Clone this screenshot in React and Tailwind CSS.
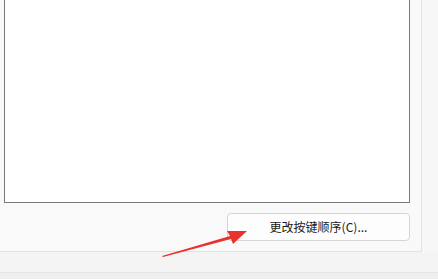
export default function App() {
  return (
    <div
      className="relative w-[438px] h-[279px] overflow-hidden bg-[#f7f7f7]"
      style={{ fontFamily: '"Noto Sans CJK SC", "Liberation Sans", sans-serif' }}
    >
      <div className="w-[422px] h-[252px] border-r border-b border-[#e2e2e2] bg-[#f9f9f9] pl-[4px] pr-[11px] flex flex-col">
        <div className="h-[203px] bg-white border border-t-0 border-[#7a7a7a]" />
        <div className="flex justify-end mt-[10px]">
          <button className="w-[183px] h-[28px] rounded-[4px] border border-[#d5d5d5] bg-[#fdfdfd] text-[12px] text-[#1a1a1a] flex items-center justify-center">
            更改按键顺序(C)...
          </button>
        </div>
      </div>
      <div className="h-[20px] bg-[#f4f4f4]" />
      <div className="h-[7px] border-t border-[#e4e4e4] bg-[#eeeeee]" />

      <svg className="absolute left-0 top-0" width="438" height="279" viewBox="0 0 438 279">
        <polygon
          points="162,256 230,236 227,231 247,231 233,244 231,239 163,257"
          fill="#e8322e"
        />
      </svg>
    </div>
  );
}
